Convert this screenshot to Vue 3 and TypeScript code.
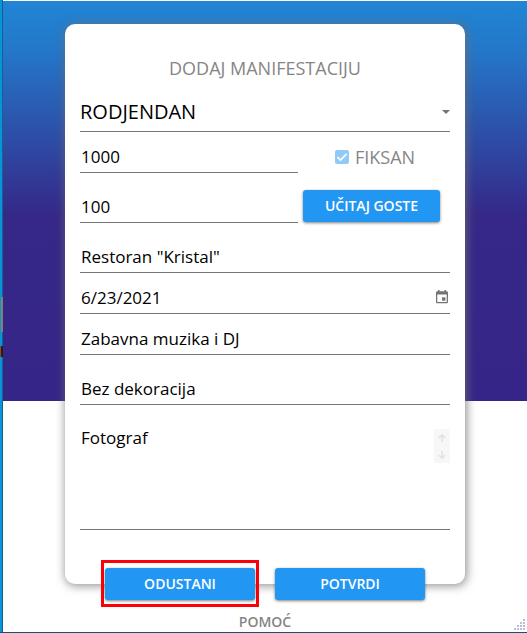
<script setup lang="ts">
import { ref } from 'vue'

const eventType = ref('RODJENDAN')
const budget = ref('1000')
const fixedBudget = ref(true)
const guests = ref('100')
const place = ref('Restoran "Kristal"')
const date = ref('6/23/2021')
const music = ref('Zabavna muzika i DJ')
const decoration = ref('Bez dekoracija')
const extras = ref('Fotograf')

const gripDots: [number, number][] = []
for (let row = 0; row < 4; row++) {
  for (let col = 3 - row; col < 4; col++) gripDots.push([col * 3, row * 3])
}
</script>

<template>
  <div class="window">
    <div class="edge"><i class="mark"></i><i class="notch"></i></div>
    <main class="page">
      <form class="card" @submit.prevent>
        <h1 class="title">DODAJ MANIFESTACIJU</h1>

        <div class="field type">
          <select v-model="eventType" aria-label="Tip manifestacije">
            <option>RODJENDAN</option>
          </select>
          <svg class="arrow" width="8" height="4" viewBox="0 0 8 4"><path d="M0 0h8L4 4z" fill="#757575" /></svg>
        </div>

        <div class="pair near">
          <div class="field"><input v-model="budget" type="text" aria-label="Budžet" /></div>
          <label class="check">
            <span class="box">
              <input v-model="fixedBudget" type="checkbox" disabled />
              <svg v-if="fixedBudget" width="14" height="14" viewBox="0 0 14 14">
                <path d="M2.5 7.2 5.5 10.1 11.6 3.9" fill="none" stroke="#fff" stroke-width="1.6" />
              </svg>
            </span>
            <span>FIKSAN</span>
          </label>
        </div>

        <div class="pair far">
          <div class="field"><input v-model="guests" type="text" aria-label="Broj gostiju" /></div>
          <button type="button" class="btn load">UČITAJ GOSTE</button>
        </div>

        <div class="field far"><input v-model="place" type="text" aria-label="Mesto" /></div>

        <div class="field near">
          <input v-model="date" type="text" aria-label="Datum" />
          <button type="button" class="calendar" aria-label="Izaberi datum">
            <svg width="12" height="14" viewBox="0 0 12 14" fill="#757575">
              <path fill-rule="evenodd" d="M2 0h1.5v1.3h5V0H10v1.3h.7c.7 0 1.3.6 1.3 1.3v9.3c0 .7-.6 1.3-1.3 1.3H1.3C.6 13.2 0 12.6 0 11.9V2.6c0-.7.6-1.3 1.3-1.3H2zM1.3 4.6v7.3h9.4V4.6z" />
              <path d="M6 7.3h3.4v3.4H6z" />
            </svg>
          </button>
        </div>

        <div class="field near"><input v-model="music" type="text" aria-label="Muzika" /></div>
        <div class="field far"><input v-model="decoration" type="text" aria-label="Dekoracija" /></div>

        <div class="field far notes">
          <textarea v-model="extras" aria-label="Dodatni zahtevi"></textarea>
          <div class="scroller">
            <svg width="16" height="34" viewBox="0 0 16 34" fill="none" stroke="#e4e4e4" stroke-width="1.7">
              <path d="M8 13V6M4.8 9 8 5.8 11.2 9" />
              <path d="M8 22v7M4.8 26 8 29.2 11.2 26" />
            </svg>
          </div>
        </div>

        <div class="actions">
          <div class="action marked"><button type="button" class="btn">ODUSTANI</button></div>
          <div class="action"><button type="submit" class="btn">POTVRDI</button></div>
        </div>
      </form>
      <a class="help" href="#">POMOĆ</a>
      <svg class="grip" width="12" height="12" viewBox="0 0 12 12" aria-hidden="true">
        <rect v-for="([x, y], i) in gripDots" :key="i" :x="x" :y="y" width="2" height="2" fill="#b8bfd2" />
      </svg>
    </main>
  </div>
</template>

<style>
body {
  background: #fff;
}
</style>

<style scoped>
* {
  box-sizing: border-box;
}

.window {
  display: flex;
  min-height: 100vh;
  padding-top: 1px;
  border-bottom: 1px solid #1a4d78;
  font-family: "Segoe UI", "Open Sans", "Noto Sans", sans-serif;
  color: #000;
}

.edge {
  position: relative;
  flex: none;
  width: 3px;
  margin-top: -1px;
  background: #0794da;
  border-right: 1px solid #176184;
}

.mark,
.notch {
  position: absolute;
  left: 0;
  width: 3px;
}

.mark {
  top: 297px;
  left: 1px;
  width: 2px;
  height: 35px;
  background: #877f68;
}

.notch {
  top: 346px;
  height: 11px;
  background: linear-gradient(90deg, #a8430d 1px, #18212d 1px);
}

.page {
  position: relative;
  flex: 1;
  display: flex;
  flex-direction: column;
  align-items: center;
  padding: 23px 20px 0;
  background: linear-gradient(#2185d5 0, #2477c9 50px, #352888 214px, #352588 400px, #fff 400px);
}

.card {
  display: flex;
  flex-direction: column;
  width: 100%;
  max-width: 400px;
  padding: 32px 15px 0;
  margin-bottom: 28px;
  background: #fff;
  border-radius: 10px;
  box-shadow: 1px 1px 10px 1px rgba(112, 112, 112, 0.75);
}

.title {
  margin: 0 0 11px;
  font-size: 18px;
  font-weight: 400;
  line-height: 25px;
  text-align: center;
  color: #858585;
}

.field {
  position: relative;
  display: flex;
  align-items: center;
  min-width: 0;
  height: 33px;
  border-bottom: 1px solid #757575;
}

.near {
  margin-top: 8px;
}

.far {
  margin-top: 17px;
}

.type {
  height: 40px;
}

select,
input[type="text"],
textarea {
  flex: 1;
  min-width: 0;
  height: 100%;
  margin: 0;
  padding: 0 1px;
  border: 0;
  outline: 0;
  background: transparent;
  color: inherit;
  font: 17px/32px "Segoe UI", "Open Sans", "Noto Sans", sans-serif;
}

select {
  padding: 0;
  appearance: none;
  font-size: 20px;
}

textarea {
  resize: none;
}

.arrow {
  position: absolute;
  right: 0;
  pointer-events: none;
}

.pair {
  display: grid;
  grid-template-columns: minmax(0, 218fr) minmax(0, 147fr);
  gap: 5px;
}

.check {
  display: flex;
  align-items: center;
  gap: 6px;
  height: 33px;
  padding-left: 32px;
  font-size: 18px;
  font-weight: 400;
  color: #858585;
}

.box {
  display: grid;
}

.box > * {
  grid-area: 1 / 1;
}

.box input {
  width: 14px;
  height: 14px;
  margin: 0;
  appearance: none;
  border-radius: 2px;
  background: #90caf9;
}

.btn {
  width: 100%;
  height: 32px;
  padding: 0;
  border: 0;
  border-radius: 3px;
  background: #2196f3;
  box-shadow: 0 1px 3px rgba(0, 0, 0, 0.5);
  color: #fff;
  font: 600 14px/32px "Segoe UI", "Open Sans", "Noto Sans", sans-serif;
}

.load {
  width: auto;
  margin-right: 10px;
}

.calendar {
  display: flex;
  padding: 0;
  margin-right: 2px;
  border: 0;
  background: transparent;
}

.notes {
  height: 108px;
  align-items: flex-start;
}

.scroller {
  height: 34px;
  margin-top: 7px;
  background: #f7f7f7;
}

/* The buttons straddle the bottom edge of the card. */
.actions {
  display: flex;
  justify-content: center;
  gap: 12px;
  margin: 30px 0 -23px;
}

.action {
  flex: 1;
  max-width: 158px;
  padding: 5px 1px 4px;
  border: 3px solid transparent;
}

.marked {
  border-color: #fd0008;
}

.help {
  font-size: 14px;
  font-weight: 600;
  line-height: 20px;
  color: #858585;
  text-decoration: none;
}

.grip {
  position: absolute;
  right: 1px;
  bottom: 1px;
}
</style>
